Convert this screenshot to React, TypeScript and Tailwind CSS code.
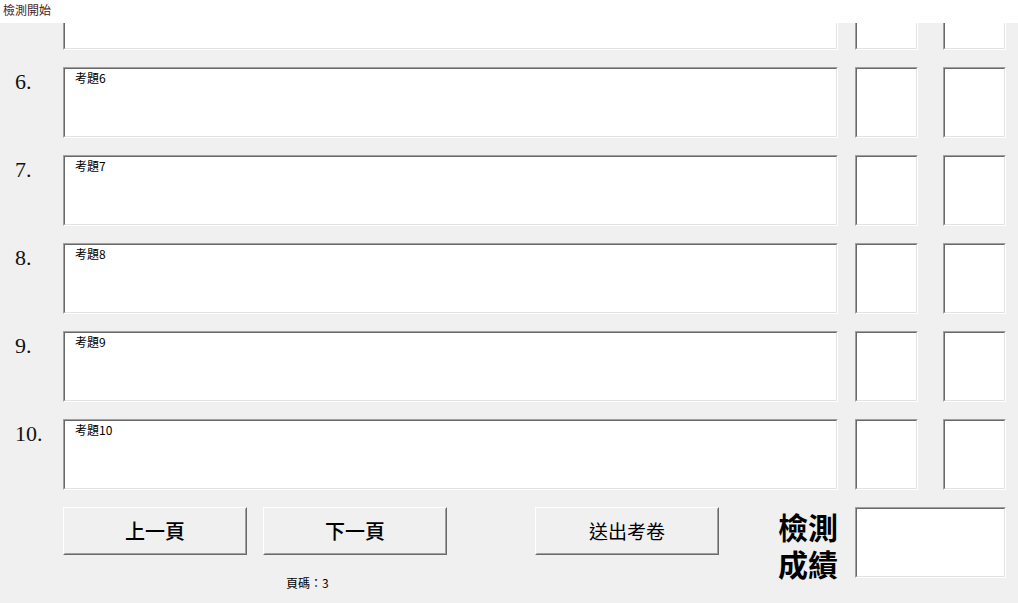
import React from "react"

const cjk = "font-['Noto_Sans_CJK_TC','Noto_Sans',sans-serif]"

function Sunken({className, children}: {className?: string, children?: React.ReactNode}) {
    return (
        <div className={"border border-t-[#a0a0a0] border-l-[#a0a0a0] border-b-white border-r-white " + (className ?? "")}>
            <div className="h-full w-full border border-t-[#696969] border-l-[#696969] border-b-[#e3e3e3] border-r-[#e3e3e3] bg-white">
                {children}
            </div>
        </div>
    )
}

function Button({label, className}: {label: string, className?: string}) {
    return (
        <button
            type="button"
            className={"h-[48px] w-[184px] border border-t-white border-l-white border-b-[#696969] border-r-[#696969] bg-[#f0f0f0] " + (className ?? "")}
        >
            <div className="flex h-full w-full items-center justify-center border border-t-[#f0f0f0] border-l-[#f0f0f0] border-b-[#a0a0a0] border-r-[#a0a0a0]">
                {label}
            </div>
        </button>
    )
}

const rows = [5, 6, 7, 8, 9, 10]

export default function App() {
    return (
        <div className={"relative h-[603px] w-[1018px] overflow-hidden bg-[#f0f0f0] " + cjk}>
            <div className="absolute left-0 top-0 z-10 flex h-[23px] w-full items-start bg-white pl-[3px] pt-[2px] text-[12px] leading-[16px] text-[#4a2020]">
                檢測開始
            </div>

            <div className="-mt-[21px] flex flex-col gap-[17px]">
                {rows.map((n) => (
                    <div key={n} className="flex h-[71px]">
                        <div className="w-[63px] pl-[15px] pt-[1px] font-['Liberation_Serif',serif] text-[22px] leading-[28px] text-[#111]">
                            {n > 5 ? `${n}.` : ""}
                        </div>
                        <Sunken className="h-[71px] w-[775px]">
                            {n > 5 && (
                                <div className="pl-[10px] pt-[1px] text-[12px] leading-[16px] text-black">考題{n}</div>
                            )}
                        </Sunken>
                        <Sunken className="ml-[17px] h-[71px] w-[63px]" />
                        <Sunken className="ml-[25px] h-[71px] w-[63px]" />
                    </div>
                ))}
            </div>

            <div className="mt-[17px] flex">
                <div className="ml-[63px] flex flex-col">
                    <div className="flex gap-[16px]">
                        <Button label="上一頁" className="text-[20px] font-medium text-black" />
                        <Button label="下一頁" className="text-[20px] font-medium text-black" />
                    </div>
                    <div className="mt-[21px] pl-[223px] text-[12px] leading-[14px] text-black">頁碼：3</div>
                </div>
                <Button label="送出考卷" className="ml-[88px] text-[19px] text-black" />
                <div className="ml-[57px] flex w-[62px] flex-col pt-[1px] text-right text-[30px] font-bold leading-[37px] text-black">
                    <span>檢測</span>
                    <span>成績</span>
                </div>
                <Sunken className="ml-[17px] h-[71px] w-[151px]" />
            </div>
        </div>
    )
}
